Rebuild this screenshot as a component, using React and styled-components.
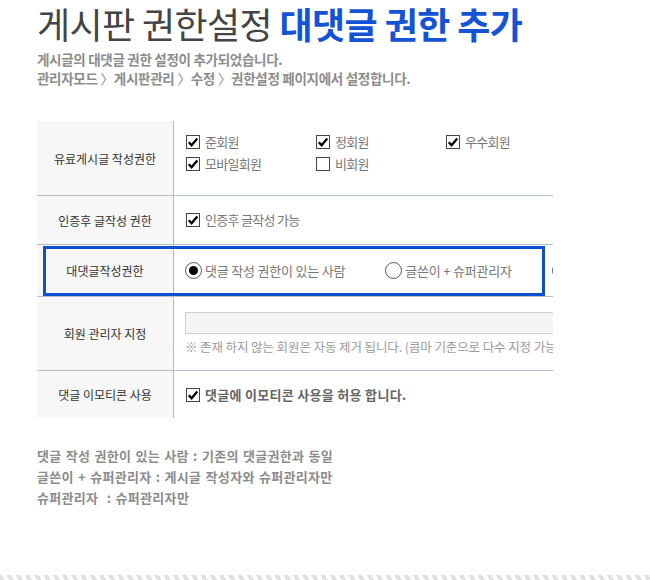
import React from "react";
import styled, { createGlobalStyle } from "styled-components";

const Global = createGlobalStyle`
  html, body { margin: 0; padding: 0; background: #fff; }
  body { font-family: "Noto Sans CJK KR", "Noto Sans", sans-serif; }
  * { box-sizing: border-box; }
`;

const Page = styled.div`
  width: 650px;
  height: 580px;
  display: flex;
  flex-direction: column;
  overflow: hidden;
`;

const Main = styled.div`
  flex: 1;
  padding: 0 0 0 37px;
`;

const Title = styled.h1`
  margin: 0;
  padding: 0;
  font-size: 36px;
  line-height: 46px;
  font-weight: 400;
  letter-spacing: -0.6px;
  color: #444;
  white-space: nowrap;
`;

const Accent = styled.span`
  color: #1553d6;
  font-weight: 700;
`;

const Intro = styled.div`
  margin-top: 4px;
  font-size: 13.5px;
  line-height: 19px;
  font-weight: 700;
  letter-spacing: -0.3px;
  color: #8c8c8c;
  white-space: nowrap;
`;

const Sep = styled.span`
  display: inline-block;
  margin: 0 0 0 3px;
  font-weight: 400;
`;

const Table = styled.div`
  margin-top: 33px;
  width: 516px;
  overflow: hidden;
`;

const Row = styled.div`
  position: relative;
  display: grid;
  grid-template-columns: 137px 1fr;
  height: ${(p) => p.$h}px;
  border-top: ${(p) => (p.$first ? "none" : "1px solid #b3bfcd")};
`;

const Label = styled.div`
  background: #f7f7f7;
  border-right: 1px solid #a9b8cc;
  display: flex;
  align-items: center;
  justify-content: center;
  font-size: 12px;
  letter-spacing: 0px;
  color: #333;
  white-space: nowrap;
`;

const Cell = styled.div`
  display: flex;
  flex-direction: column;
  justify-content: ${(p) => p.$justify || "center"};
  padding: ${(p) => p.$pad || "0 0 0 11px"};
  min-width: 0;
  overflow: hidden;
`;

const CheckGrid = styled.div`
  display: grid;
  grid-template-columns: repeat(3, 130px);
  row-gap: 8px;
`;

const Opt = styled.label`
  display: flex;
  align-items: center;
  gap: 5px;
  font-size: 13px;
  letter-spacing: ${(p) => (p.$strong ? "0.3px" : "-0.7px")};
  color: ${(p) => (p.$strong ? "#666" : "#777")};
  font-weight: ${(p) => (p.$strong ? 700 : 400)};
  white-space: nowrap;
  line-height: 14px;
`;

const Box = styled.span`
  width: 14px;
  height: 14px;
  flex: none;
  border: 1px solid #444;
  background: #fff;
  display: flex;
  align-items: center;
  justify-content: center;
`;

const Radios = styled.div`
  display: flex;
  gap: 40px;
  white-space: nowrap;
`;

const RadioOpt = styled.label`
  display: flex;
  align-items: center;
  gap: 3px;
  font-size: 13px;
  letter-spacing: -0.2px;
  color: #777;
  white-space: nowrap;
`;

const Circle = styled.span`
  width: 17px;
  height: 17px;
  flex: none;
  border-radius: 50%;
  border: 1px solid #555;
  display: flex;
  align-items: center;
  justify-content: center;
  &::after {
    content: "";
    display: ${(p) => (p.$on ? "block" : "none")};
    width: 9px;
    height: 9px;
    border-radius: 50%;
    background: #000;
  }
`;

const Highlight = styled.div`
  position: absolute;
  left: 6px;
  top: 1px;
  width: 502px;
  height: 50px;
  border: 3px solid #0c4fd3;
  pointer-events: none;
`;

const Input = styled.div`
  height: 22px;
  width: 400px;
  background: #f5f5f5;
  border: 1px solid #cfcfcf;
`;

const Hint = styled.div`
  margin-top: 5px;
  font-size: 12.5px;
  letter-spacing: -0.1px;
  color: #9a9a9a;
  white-space: nowrap;
  line-height: 16px;
`;

const Notes = styled.div`
  margin-top: 27px;
  font-size: 13px;
  line-height: 21px;
  font-weight: 700;
  letter-spacing: 0.3px;
  word-spacing: 1px;
  color: #8c8c8c;
  white-space: pre;
`;

const Stripe = styled.div`
  height: 5px;
  flex: none;
  background: repeating-linear-gradient(
    60deg,
    #e0e0e0 0 4px,
    #fff 4px 8px
  );
`;

const Check = ({ on }) => (
  <Box>
    {on && (
      <svg width="12" height="12" viewBox="0 0 12 12">
        <path d="M1.8 6.3 L4.6 9.2 L10.3 2.6" fill="none" stroke="#000" strokeWidth="2.3" />
      </svg>
    )}
  </Box>
);

export default function App() {
  return (
    <Page>
      <Global />
      <Main>
        <Title>
          게시판 권한설정 <Accent>대댓글 권한 추가</Accent>
        </Title>
        <Intro>
          게시글의 대댓글 권한 설정이 추가되었습니다.
          <br />
          관리자모드<Sep>〉</Sep>게시판관리<Sep>〉</Sep>수정<Sep>〉</Sep>권한설정 페이지에서 설정합니다.
        </Intro>
        <Table>
          <Row $h={74} $first>
            <Label>유료게시글 작성권한</Label>
            <Cell $justify="flex-start" $pad="14px 0 0 12px">
              <CheckGrid>
                <Opt><Check on />준회원</Opt>
                <Opt><Check on />정회원</Opt>
                <Opt><Check on />우수회원</Opt>
                <Opt><Check on />모바일회원</Opt>
                <Opt><Check />비회원</Opt>
              </CheckGrid>
            </Cell>
          </Row>
          <Row $h={49}>
            <Label>인증후 글작성 권한</Label>
            <Cell $pad="0 0 0 12px">
              <Opt><Check on />인증후 글작성 가능</Opt>
            </Cell>
          </Row>
          <Row $h={52}>
            <Label>대댓글작성권한</Label>
            <Cell $pad="0 0 0 11px">
              <Radios>
                <RadioOpt><Circle $on />댓글 작성 권한이 있는 사람</RadioOpt>
                <RadioOpt><Circle />글쓴이 + 슈퍼관리자</RadioOpt>
                <RadioOpt><Circle />슈퍼관리자</RadioOpt>
              </Radios>
            </Cell>
            <Highlight />
          </Row>
          <Row $h={74}>
            <Label>회원 관리자 지정</Label>
            <Cell $justify="flex-start" $pad="15px 0 0 11px">
              <Input />
              <Hint>※ 존재 하지 않는 회원은 자동 제거 됩니다. (콤마 기준으로 다수 지정 가능)</Hint>
            </Cell>
          </Row>
          <Row $h={48}>
            <Label>댓글 이모티콘 사용</Label>
            <Cell $pad="0 0 0 12px">
              <Opt $strong><Check on />댓글에 이모티콘 사용을 허용 합니다.</Opt>
            </Cell>
          </Row>
        </Table>
        <Notes>
          {"댓글 작성 권한이 있는 사람 : 기존의 댓글권한과 동일\n글쓴이 + 슈퍼관리자 : 게시글 작성자와 슈퍼관리자만\n슈퍼관리자  : 슈퍼관리자만"}
        </Notes>
      </Main>
      <Stripe />
    </Page>
  );
}
